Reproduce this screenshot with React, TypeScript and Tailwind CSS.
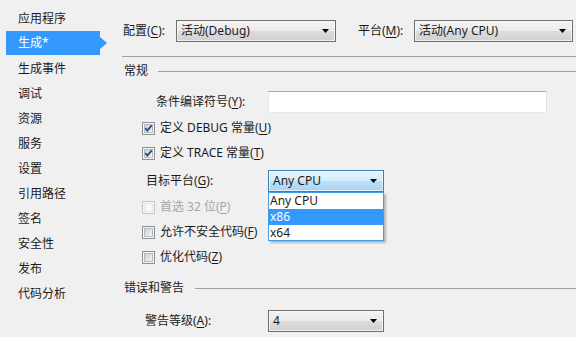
import React from "react";

const U = ({ c }: { c: string }) => (
  <span className="underline underline-offset-[2px] decoration-[1px]">{c}</span>
);

const Arrow = () => (
  <svg width="7" height="4" viewBox="0 0 7 4" className="shrink-0">
    <path d="M0 0H7L3.5 4Z" fill="#000" />
  </svg>
);

function Combo({ text, w, open }: { text: string; w: string; open?: boolean }) {
  return (
    <div
      className={
        "flex h-[22px] items-center border " +
        w +
        " " +
        (open
          ? "border-[#3c7fb1] bg-[linear-gradient(#e5f3fc,#d3ecfb_50%,#bde1f8_50%,#a7d3f2)]"
          : "border-[#707070] bg-[linear-gradient(#f3f3f3,#ebebeb_50%,#dddddd_50%,#d0d0d0)]")
      }
    >
      <div className="flex h-full w-full items-center border border-[#fbfbfb]/70 pl-[3px] pr-[5px]">
        <span className="flex-1 whitespace-nowrap leading-[16px]">{text}</span>
        <Arrow />
      </div>
    </div>
  );
}

function Check({ checked, disabled }: { checked?: boolean; disabled?: boolean }) {
  return (
    <svg width="13" height="13" viewBox="0 0 13 13" className="shrink-0">
      <defs>
        <linearGradient id={disabled ? "gd" : "gc"} x1="0" y1="0" x2="1" y2="1">
          <stop offset="0" stopColor={disabled ? "#f2f2f2" : "#cbcfd5"} />
          <stop offset="1" stopColor={disabled ? "#fafafa" : "#f6f6f6"} />
        </linearGradient>
      </defs>
      <rect x="0.5" y="0.5" width="12" height="12" fill="#f6f6f6" stroke={disabled ? "#c4c4c4" : "#8e8f8f"} />
      <rect x="2.5" y="2.5" width="8" height="8" fill={`url(#${disabled ? "gd" : "gc"})`} stroke={disabled ? "#e6e6e6" : "#b6bbc1"} />
      {checked && (
        <path d="M3.3 6.2L5.4 8.6L9.7 3.4" fill="none" stroke="#2a4c86" strokeWidth="1.9" />
      )}
    </svg>
  );
}

const navItems = [
  "应用程序",
  "生成*",
  "生成事件",
  "调试",
  "资源",
  "服务",
  "设置",
  "引用路径",
  "签名",
  "安全性",
  "发布",
  "代码分析",
];

export default function App() {
  return (
    <div className="flex h-[337px] w-[576px] overflow-hidden bg-[#f0f0f0] text-[12px] leading-[16px] text-[#1b1b1b] font-['Noto_Sans','Noto_Sans_CJK_SC',sans-serif]">
      {/* Left navigation */}
      <div className="flex w-[122px] shrink-0 flex-col pt-[6px]">
        {navItems.map((t, i) =>
          i === 1 ? (
            <div key={t} className="flex h-[25px] items-start">
              <div className="ml-[6px] flex h-[24px] w-[94px] items-center bg-[#3399ff] pl-[12px] text-white">
                {t}
              </div>
              <svg width="7" height="24" viewBox="0 0 7 24" className="shrink-0">
                <polygon points="0,6 7,12 0,18" fill="#3399ff" />
              </svg>
            </div>
          ) : (
            <div key={t} className="flex h-[25px] items-center pl-[18px]">
              {t}
            </div>
          )
        )}
      </div>

      {/* Right pane */}
      <div className="flex flex-1 flex-col pt-[20px]">
        <div className="flex h-[22px] items-center">
          <span className="ml-[1px] w-[53px] whitespace-nowrap">
            配置(<U c="C" />):
          </span>
          <Combo text="活动(Debug)" w="w-[160px]" />
          <span className="ml-[22px] w-[56px] whitespace-nowrap">
            平台(<U c="M" />):
          </span>
          <Combo text="活动(Any CPU)" w="w-[159px]" />
        </div>

        <div className="mt-[14px] h-px bg-[#a0a0a0]" />

        <div className="mt-[6px] flex h-[16px] items-center">
          <span className="ml-[2px]">常规</span>
          <div className="ml-[10px] h-px flex-1 bg-[#a0a0a0]" />
        </div>

        <div className="mt-[12px] flex h-[22px] items-center">
          <span className="ml-[34px] w-[112px] whitespace-nowrap">
            条件编译符号(<U c="Y" />):
          </span>
          <div className="h-[22px] w-[279px] border border-[#e2e3ea] border-t-[#abadb3] border-b-[#e3e9ef] bg-white" />
        </div>

        <div className="mt-[7px] flex h-[16px] items-center">
          <div className="ml-[20px]">
            <Check checked />
          </div>
          <span className="ml-[5px] whitespace-nowrap">
            定义 DEBUG 常量(<U c="U" />)
          </span>
        </div>

        <div className="mt-[9px] flex h-[16px] items-center">
          <div className="ml-[20px]">
            <Check checked />
          </div>
          <span className="ml-[5px] whitespace-nowrap">
            定义 TRACE 常量(<U c="T" />)
          </span>
        </div>

        <div className="mt-[9px] flex h-[22px] items-center">
          <span className="ml-[24px] w-[122px] whitespace-nowrap">
            目标平台(<U c="G" />):
          </span>
          <div className="relative">
            <Combo text="Any CPU" w="w-[116px]" open />
            <div className="absolute left-0 top-full z-10 w-[116px] border border-[#3d9de8] bg-white shadow-[2px_2px_2px_rgba(0,0,0,0.25)]">
              <div className="h-[16px] pl-[1px] leading-[16px]">Any CPU</div>
              <div className="h-[16px] bg-[#3399ff] pl-[1px] leading-[16px] text-white">x86</div>
              <div className="h-[15px] pl-[1px] leading-[15px]">x64</div>
            </div>
          </div>
        </div>

        <div className="mt-[7px] flex h-[16px] items-center">
          <div className="ml-[20px]">
            <Check disabled />
          </div>
          <span className="ml-[5px] whitespace-nowrap text-[#a6a6a6]">
            首选 32 位(<U c="P" />)
          </span>
        </div>

        <div className="mt-[9px] flex h-[16px] items-center">
          <div className="ml-[20px]">
            <Check />
          </div>
          <span className="ml-[5px] whitespace-nowrap">
            允许不安全代码(<U c="F" />)
          </span>
        </div>

        <div className="mt-[9px] flex h-[16px] items-center">
          <div className="ml-[20px]">
            <Check />
          </div>
          <span className="ml-[5px] whitespace-nowrap">
            优化代码(<U c="Z" />)
          </span>
        </div>

        <div className="mt-[15px] flex h-[16px] items-center">
          <span className="ml-[2px]">错误和警告</span>
          <div className="ml-[11px] h-px flex-1 bg-[#a0a0a0]" />
        </div>

        <div className="mt-[14px] flex h-[22px] items-center">
          <span className="ml-[23px] w-[123px] whitespace-nowrap">
            警告等级(<U c="A" />):
          </span>
          <Combo text="4" w="w-[116px]" />
        </div>
      </div>
    </div>
  );
}
